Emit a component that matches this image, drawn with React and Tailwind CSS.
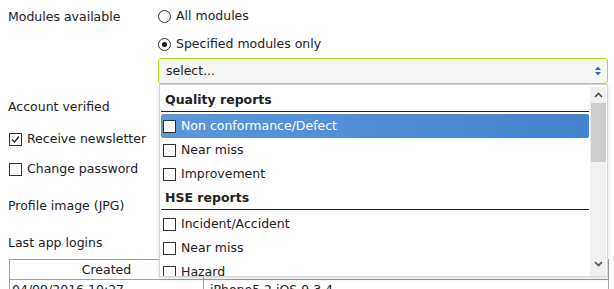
import React from 'react';

function Radio({ checked, label }) {
  return (
    <label className="flex h-[28px] items-center gap-[5px]">
      <span className="flex h-[13px] w-[13px] items-center justify-center rounded-full border border-[#333] bg-white">
        {checked && <span className="h-[5px] w-[5px] rounded-full bg-[#111]" />}
      </span>
      <span>{label}</span>
    </label>
  );
}

function Box({ checked }) {
  return (
    <span className="flex h-[13px] w-[13px] shrink-0 items-center justify-center border border-[#333] bg-white">
      {checked && (
        <svg width="9" height="9" viewBox="0 0 9 9">
          <path d="M1 4.5 L3.5 7 L8 1.5" fill="none" stroke="#222" strokeWidth="1.3" />
        </svg>
      )}
    </span>
  );
}

const groups = [
  { title: 'Quality reports', items: ['Non conformance/Defect', 'Near miss', 'Improvement'] },
  { title: 'HSE reports', items: ['Incident/Accident', 'Near miss', 'Hazard'] },
];

function Dropdown() {
  return (
    <div className="absolute left-[1px] top-full z-10 flex h-[193px] w-[449px] overflow-hidden border border-[#d4d4d4] bg-white shadow-[0_2px_4px_rgba(0,0,0,0.12)]">
      <div className="flex-1 pl-[1px] pr-[1px] pt-[3px]">
        {groups.map((g, gi) => (
          <div key={g.title}>
            <div className="mb-[2px] border-b border-[#222] pb-[3px] pl-[4px] pt-[4px] font-bold leading-[16px]">{g.title}</div>
            {g.items.map((it, i) => {
              const active = gi === 0 && i === 0;
              return (
                <div
                  key={it + gi}
                  className={
                    'flex h-[24px] items-center gap-[5px] rounded-[2px] pl-[2px] ' +
                    (active ? 'bg-gradient-to-r from-[#5c98d9] to-[#4483cd] text-white' : '')
                  }
                >
                  <Box />
                  <span>{it}</span>
                </div>
              );
            })}
          </div>
        ))}
      </div>
      <div className="mr-[1px] mt-[2px] flex w-[16px] flex-col bg-[#f0f0f0]">
        <div className="flex h-[16px] items-center justify-center">
          <svg width="9" height="6" viewBox="0 0 9 6"><path d="M1 5 L4.5 1.5 L8 5" fill="none" stroke="#505050" strokeWidth="1.6" /></svg>
        </div>
        <div className="mx-auto h-[59px] w-[15px] bg-[#cdcdcd]" />
        <div className="flex-1" />
        <div className="mb-[4px] flex h-[16px] items-center justify-center">
          <svg width="9" height="6" viewBox="0 0 9 6"><path d="M1 1 L4.5 4.5 L8 1" fill="none" stroke="#505050" strokeWidth="1.6" /></svg>
        </div>
      </div>
    </div>
  );
}

export default function App() {
  return (
    <div className="h-[289px] w-[614px] overflow-hidden bg-white pl-[8px] pt-[1px] font-['DejaVu_Sans',sans-serif] text-[12.5px] text-[#222]">
      <div className="flex">
        <div className="w-[150px] pt-[8px] leading-[16px]">Modules available</div>
        <div className="flex flex-col">
          <div className="pt-[1px]">
            <Radio label="All modules" />
            <Radio checked label="Specified modules only" />
          </div>
          <div className="relative">
            <div className="flex h-[26px] w-[450px] items-center justify-between rounded-[3px] border border-[#b8dc14] bg-[#f7f7f7] pl-[7px] pr-[6px]">
              <span>select...</span>
              <svg width="6" height="10" viewBox="0 0 6 10">
                <path d="M0 4 L3 0.5 L6 4 Z M0 6 L3 9.5 L6 6 Z" fill="#2a6db8" />
              </svg>
            </div>
            <Dropdown />
          </div>
        </div>
      </div>
      <div className="mt-[8px] flex h-[31px] items-center">Account verified</div>
      <div className="flex h-[32px] items-center gap-[5px] pl-[1px]">
        <Box checked />
        <span>Receive newsletter</span>
      </div>
      <div className="flex h-[29px] items-center gap-[5px] pl-[1px]">
        <Box />
        <span>Change password</span>
      </div>
      <div className="flex h-[45px] items-center">Profile image (JPG)</div>
      <div className="flex h-[28px] items-center">Last app logins</div>
      <table className="ml-[1px] mt-[2px] w-[600px] border-collapse">
        <thead>
          <tr className="h-[20px]">
            <th className="w-[194px] border border-[#a0a0a0] text-center font-normal leading-[18px]">Created</th>
            <th className="border border-[#a0a0a0] text-center font-normal leading-[18px]">Device</th>
          </tr>
        </thead>
        <tbody>
          <tr className="h-[20px]">
            <td className="border border-[#a0a0a0] pl-[2px] leading-[18px]">04/09/2016 10:27</td>
            <td className="border border-[#a0a0a0] pl-[6px] leading-[18px]">iPhone5,2 iOS 9.3.4</td>
          </tr>
        </tbody>
      </table>
    </div>
  );
}
